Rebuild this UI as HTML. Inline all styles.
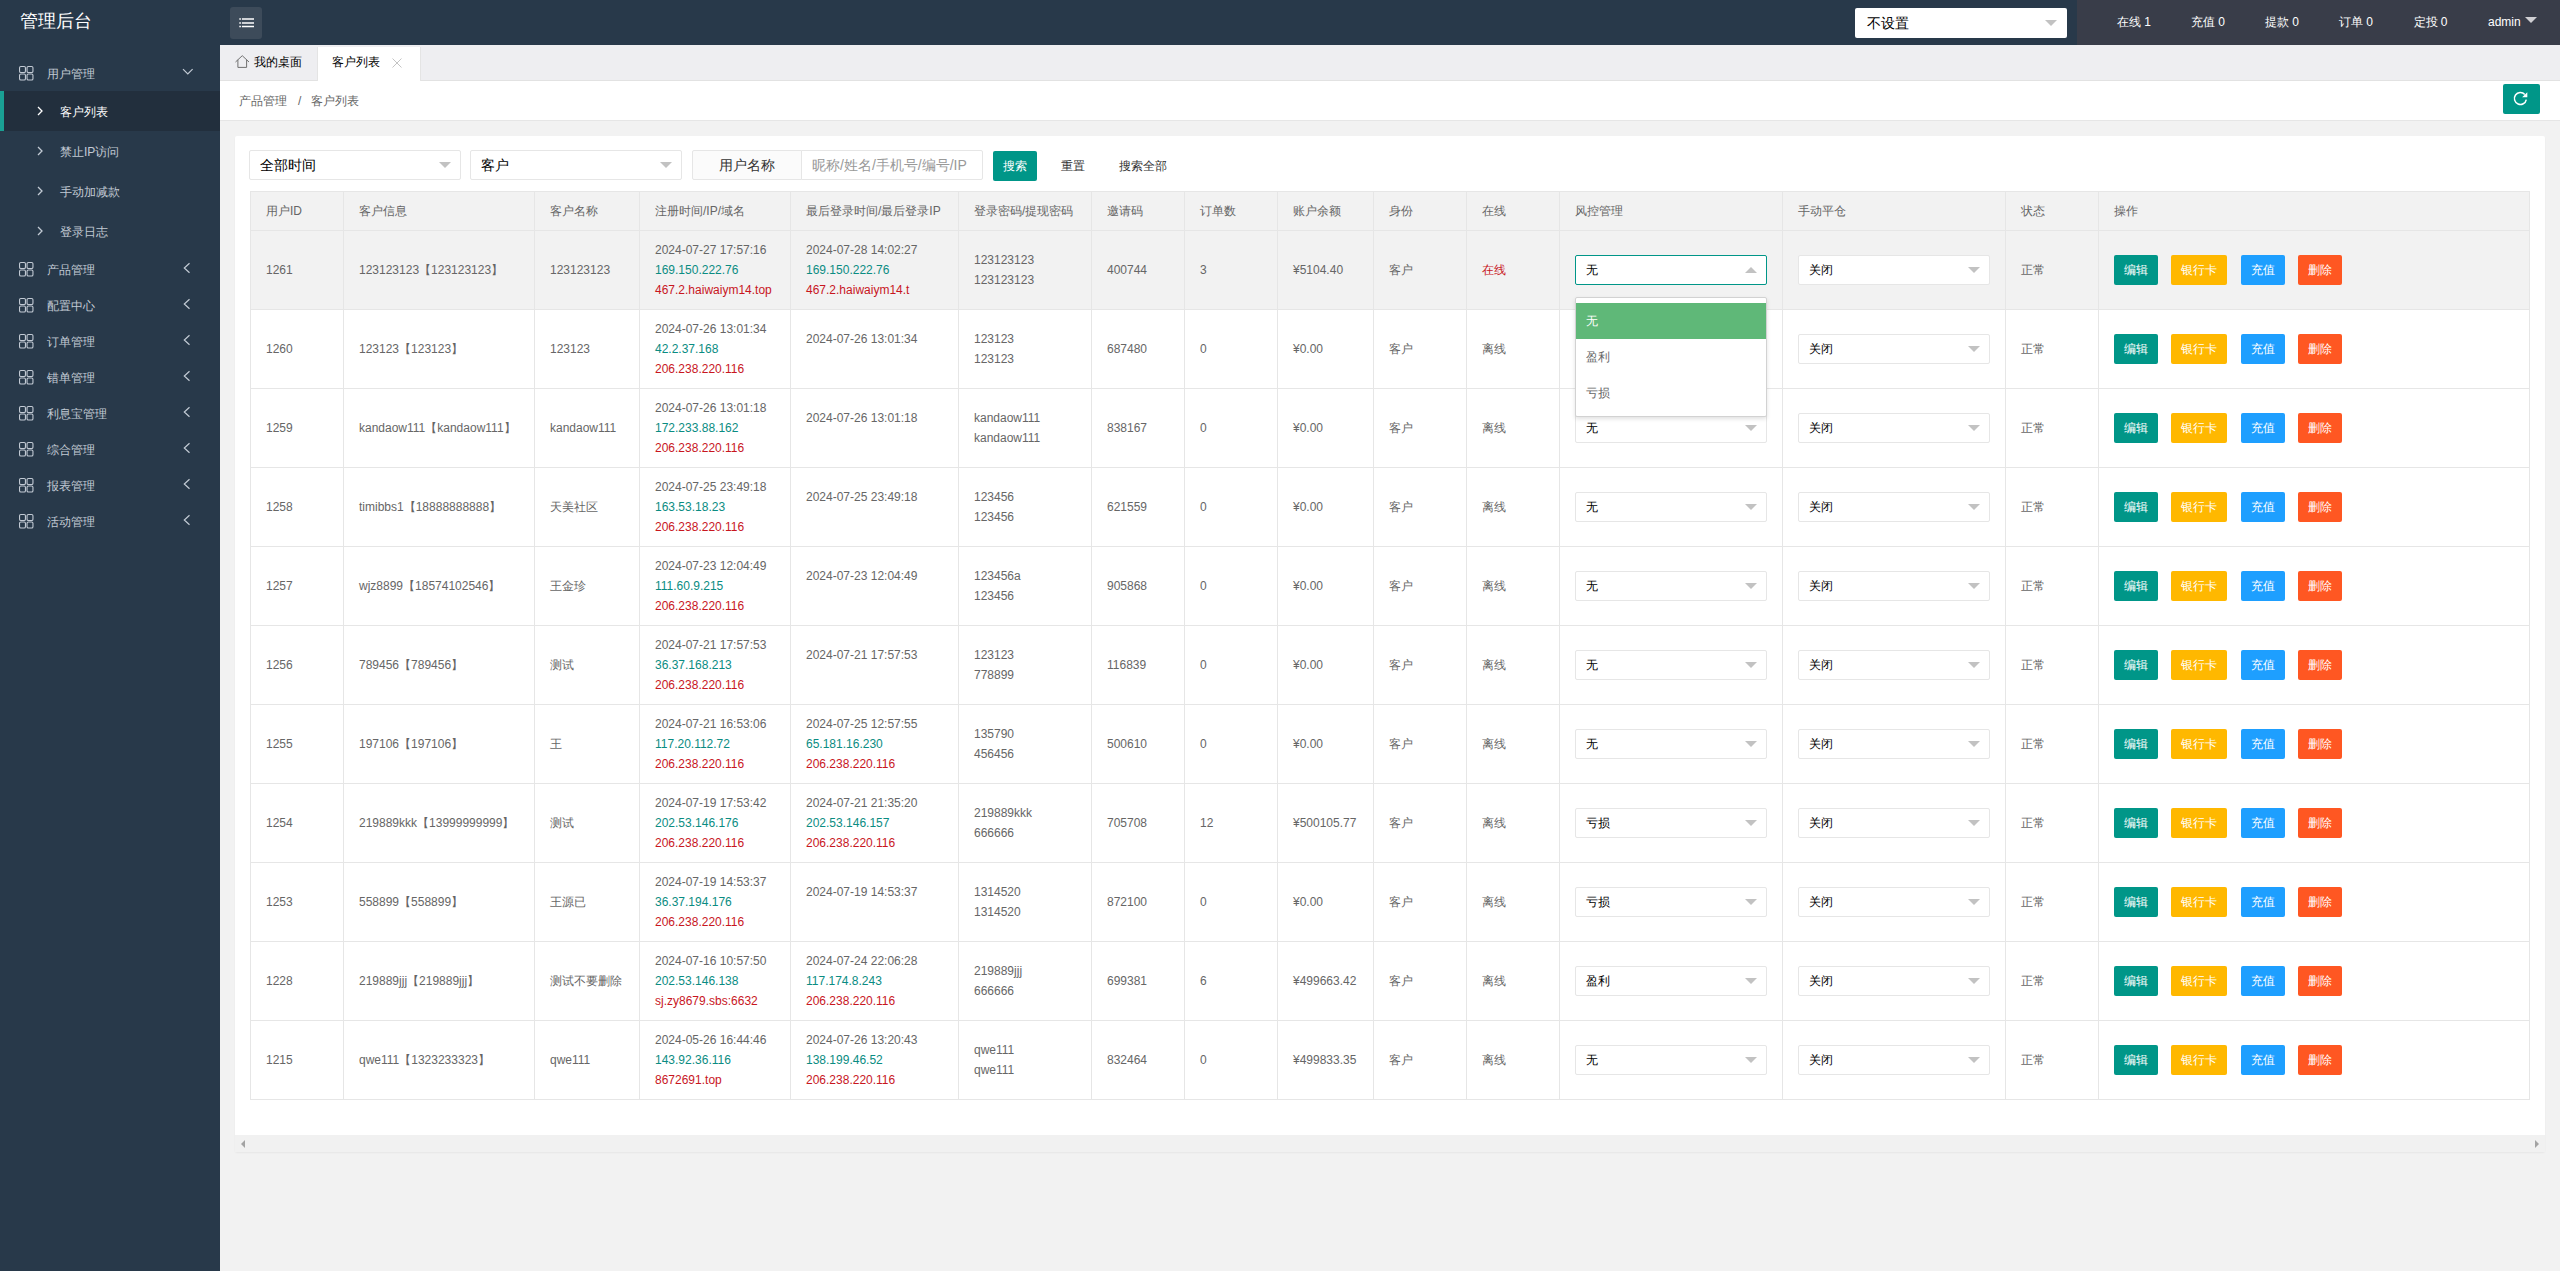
<!DOCTYPE html>
<html><head><meta charset="utf-8"><title>管理后台</title>
<style>
*{box-sizing:border-box;margin:0;padding:0}
html,body{width:2560px;height:1271px;overflow:hidden;background:#f2f2f2;font-family:"Liberation Sans",sans-serif;font-size:12px;color:#666}
.abs{position:absolute}
#hdr{position:absolute;left:0;top:0;width:2560px;height:45px;background:#28394a}
#hdr .logo{position:absolute;left:20px;top:9px;font-size:18px;line-height:24px;color:#fff}
#hdr .hb{position:absolute;left:230px;top:7px;width:32px;height:32px;border-radius:3px;background:#3d4b5a}
#hdr .hsel{position:absolute;left:1855px;top:8px;width:212px;height:30px;background:#fff;border-radius:2px;font-size:14px;color:#000;line-height:31px;padding-left:11.5px}
#hdr .right{position:absolute;left:2077px;top:0;width:483px;height:45px;background:#393d49}
#hdr .ri{position:absolute;top:0;line-height:45px;color:#fff;font-size:12px}
.tri{position:absolute;width:0;height:0;border-left:6px solid transparent;border-right:6px solid transparent;border-top:6px solid #c2c2c2}
.tri.up{border-top:0;border-bottom:6px solid #c2c2c2}
#side{position:absolute;left:0;top:45px;width:220px;height:1226px;background:#28394a}
.mp,.mc{position:absolute;left:0;width:220px;color:#c2cad4}
.mp{height:36px}
.mc{height:40px}
.mc.act{background:#222f3d;color:#fff}
.mc.act:before{content:"";position:absolute;left:0;top:0;width:4px;height:40px;background:#1aa094}
.gi{position:absolute;left:18.5px;top:10.5px;color:#c2cad4}
.mp .mt{position:absolute;left:47px;top:1px;line-height:36px}
.mc .mt{position:absolute;left:60px;top:1px;line-height:40px}
.chl{position:absolute;left:183px;top:11px}
.chd{position:absolute;left:181.5px;top:12.5px}
.chr{position:absolute;left:37px;top:15px}
#tabs{position:absolute;left:220px;top:45px;width:2340px;height:36px;background:#eeeef1;border-bottom:1px solid #e2e2e2}
.tab{position:absolute;top:0;height:36px;font-size:12px;color:#000;line-height:35px}
#bc{position:absolute;left:220px;top:81px;width:2340px;height:40px;background:#fff;border-bottom:1px solid #e6e6e6}
#bc .t{position:absolute;top:1px;line-height:39px;color:#666}
.rbtn{position:absolute;left:2503px;top:84px;width:37px;height:30px;background:#009688;border-radius:2px}
#card{position:absolute;left:235px;top:136px;width:2310px;height:1016px;background:#fff;border-radius:2px;box-shadow:0 1px 2px rgba(0,0,0,.05)}
.sbar{position:absolute;left:235px;top:1135px;width:2310px;height:17px;background:#f1f1f1}
.sel{position:absolute;top:150px;height:30px;border:1px solid #e6e6e6;border-radius:2px;background:#fff;font-size:14px;color:#000;line-height:28px;padding-left:10px}
.lbl{position:absolute;left:692px;top:150px;width:110px;height:30px;border:1px solid #e6e6e6;border-radius:2px 0 0 2px;background:#fbfbfb;font-size:14px;color:#333;line-height:28px;text-align:center}
.inp{position:absolute;left:801px;top:150px;width:182px;height:30px;border:1px solid #e6e6e6;border-radius:0 2px 2px 0;background:#fff;font-size:14px;color:#999;line-height:28px;padding-left:10px}
.sbtn{position:absolute;left:993px;top:151px;width:44px;height:30px;background:#009688;color:#fff;border-radius:2px;line-height:30px;text-align:center}
.tbtn{position:absolute;top:151px;line-height:30px;color:#333}
table{position:absolute;left:250px;top:191px;border-collapse:separate;border-spacing:0;table-layout:fixed;width:2280px;border-top:1px solid #e6e6e6;border-left:1px solid #e6e6e6}
th,td{border-right:1px solid #e6e6e6;border-bottom:1px solid #e6e6e6;padding:9px 15px;line-height:20px;text-align:left;font-weight:normal;color:#666;vertical-align:middle;white-space:nowrap;overflow:visible}
th{background:#f2f2f2}
tr.hov td{background:#f2f2f2}
.g{color:#0a8c82}
.r{color:#c8161e}
.tsel{position:relative;width:192px;height:30px;border:1px solid #e6e6e6;border-radius:2px;background:#fff;color:#000;line-height:28px;padding-left:10px;font-size:12px}
.tsel.open{border-color:#009688}
.tsel .tri{left:169px;top:11px}
.tsel .tri.up{top:11px}
.ops{height:30px;white-space:nowrap}
.b{display:inline-block;height:30px;line-height:30px;padding:0 10px;color:#fff;border-radius:2px;font-size:12px;vertical-align:top}
.b1{background:#009688}
.b2{background:#ffb800;margin-left:13px}
.b3{background:#1e9fff;margin-left:14px}
.b4{background:#ff5722;margin-left:13px}
.dd{position:absolute;left:1575px;top:297px;width:192px;height:120px;background:#fff;border:1px solid #d2d2d2;border-radius:2px;box-shadow:0 2px 4px rgba(0,0,0,.12);padding:5px 0}
.dd div{height:36px;line-height:36px;padding-left:10px;color:#666;font-size:12px}
.dd div.on{background:#5fb878;color:#fff}
</style></head><body>
<div id="hdr">
  <div class="logo">管理后台</div>
  <div class="hb"><svg style="position:absolute;left:8.5px;top:11px" width="16" height="10" viewBox="0 0 16 10"><path d="M0.3 1H1.9M2.9 1H15M0.3 4.9H1.9M2.9 4.9H15M0.3 8.6H1.9M2.9 8.6H15" stroke="#fff" stroke-width="1.5"/></svg></div>
  <div class="hsel">不设置<i class="tri" style="left:189.8px;top:12px"></i></div>
  <div class="right"></div>
  <div class="ri" style="left:2117px">在线 1</div>
  <div class="ri" style="left:2191px">充值 0</div>
  <div class="ri" style="left:2265px">提款 0</div>
  <div class="ri" style="left:2339px">订单 0</div>
  <div class="ri" style="left:2413.5px">定投 0</div>
  <div class="ri" style="left:2488px">admin</div>
  <i class="tri" style="left:2525px;top:17px;border-left-width:6px;border-right-width:6px;border-top:6.5px solid #cfcfd3"></i>
</div>
<div id="side">
  <div class="mp" style="top:10px"><svg class="gi" width="15" height="15" viewBox="0 0 15 15"><g fill="none" stroke="currentColor" stroke-width="1.1"><rect x="0.55" y="0.55" width="5.9" height="5.9" rx="1.3"/><rect x="8.05" y="0.55" width="5.9" height="5.9" rx="1.3"/><rect x="0.55" y="8.05" width="5.9" height="5.9" rx="1.3"/><rect x="8.05" y="8.05" width="5.9" height="5.9" rx="1.3"/></g></svg><span class="mt">用户管理</span><svg class="chd" width="12" height="8" viewBox="0 0 12 8"><path d="M1 1.2 L5.8 6 L10.6 1.2" fill="none" stroke="currentColor" stroke-width="1.2"/></svg></div>
  <div class="mc act" style="top:46px"><svg class="chr" width="6" height="10" viewBox="0 0 6 10"><path d="M1 1 L5 5 L1 9" fill="none" stroke="currentColor" stroke-width="1.3"/></svg><span class="mt">客户列表</span></div><div class="mc" style="top:86px"><svg class="chr" width="6" height="10" viewBox="0 0 6 10"><path d="M1 1 L5 5 L1 9" fill="none" stroke="currentColor" stroke-width="1.3"/></svg><span class="mt">禁止IP访问</span></div><div class="mc" style="top:126px"><svg class="chr" width="6" height="10" viewBox="0 0 6 10"><path d="M1 1 L5 5 L1 9" fill="none" stroke="currentColor" stroke-width="1.3"/></svg><span class="mt">手动加减款</span></div><div class="mc" style="top:166px"><svg class="chr" width="6" height="10" viewBox="0 0 6 10"><path d="M1 1 L5 5 L1 9" fill="none" stroke="currentColor" stroke-width="1.3"/></svg><span class="mt">登录日志</span></div>
  <div class="mp" style="top:206px"><svg class="gi" width="15" height="15" viewBox="0 0 15 15"><g fill="none" stroke="currentColor" stroke-width="1.1"><rect x="0.55" y="0.55" width="5.9" height="5.9" rx="1.3"/><rect x="8.05" y="0.55" width="5.9" height="5.9" rx="1.3"/><rect x="0.55" y="8.05" width="5.9" height="5.9" rx="1.3"/><rect x="8.05" y="8.05" width="5.9" height="5.9" rx="1.3"/></g></svg><span class="mt">产品管理</span><svg class="chl" width="8" height="14" viewBox="0 0 8 14"><path d="M6.5 1.2 L1.3 6 L6.5 10.8" fill="none" stroke="currentColor" stroke-width="1.2"/></svg></div><div class="mp" style="top:242px"><svg class="gi" width="15" height="15" viewBox="0 0 15 15"><g fill="none" stroke="currentColor" stroke-width="1.1"><rect x="0.55" y="0.55" width="5.9" height="5.9" rx="1.3"/><rect x="8.05" y="0.55" width="5.9" height="5.9" rx="1.3"/><rect x="0.55" y="8.05" width="5.9" height="5.9" rx="1.3"/><rect x="8.05" y="8.05" width="5.9" height="5.9" rx="1.3"/></g></svg><span class="mt">配置中心</span><svg class="chl" width="8" height="14" viewBox="0 0 8 14"><path d="M6.5 1.2 L1.3 6 L6.5 10.8" fill="none" stroke="currentColor" stroke-width="1.2"/></svg></div><div class="mp" style="top:278px"><svg class="gi" width="15" height="15" viewBox="0 0 15 15"><g fill="none" stroke="currentColor" stroke-width="1.1"><rect x="0.55" y="0.55" width="5.9" height="5.9" rx="1.3"/><rect x="8.05" y="0.55" width="5.9" height="5.9" rx="1.3"/><rect x="0.55" y="8.05" width="5.9" height="5.9" rx="1.3"/><rect x="8.05" y="8.05" width="5.9" height="5.9" rx="1.3"/></g></svg><span class="mt">订单管理</span><svg class="chl" width="8" height="14" viewBox="0 0 8 14"><path d="M6.5 1.2 L1.3 6 L6.5 10.8" fill="none" stroke="currentColor" stroke-width="1.2"/></svg></div><div class="mp" style="top:314px"><svg class="gi" width="15" height="15" viewBox="0 0 15 15"><g fill="none" stroke="currentColor" stroke-width="1.1"><rect x="0.55" y="0.55" width="5.9" height="5.9" rx="1.3"/><rect x="8.05" y="0.55" width="5.9" height="5.9" rx="1.3"/><rect x="0.55" y="8.05" width="5.9" height="5.9" rx="1.3"/><rect x="8.05" y="8.05" width="5.9" height="5.9" rx="1.3"/></g></svg><span class="mt">错单管理</span><svg class="chl" width="8" height="14" viewBox="0 0 8 14"><path d="M6.5 1.2 L1.3 6 L6.5 10.8" fill="none" stroke="currentColor" stroke-width="1.2"/></svg></div><div class="mp" style="top:350px"><svg class="gi" width="15" height="15" viewBox="0 0 15 15"><g fill="none" stroke="currentColor" stroke-width="1.1"><rect x="0.55" y="0.55" width="5.9" height="5.9" rx="1.3"/><rect x="8.05" y="0.55" width="5.9" height="5.9" rx="1.3"/><rect x="0.55" y="8.05" width="5.9" height="5.9" rx="1.3"/><rect x="8.05" y="8.05" width="5.9" height="5.9" rx="1.3"/></g></svg><span class="mt">利息宝管理</span><svg class="chl" width="8" height="14" viewBox="0 0 8 14"><path d="M6.5 1.2 L1.3 6 L6.5 10.8" fill="none" stroke="currentColor" stroke-width="1.2"/></svg></div><div class="mp" style="top:386px"><svg class="gi" width="15" height="15" viewBox="0 0 15 15"><g fill="none" stroke="currentColor" stroke-width="1.1"><rect x="0.55" y="0.55" width="5.9" height="5.9" rx="1.3"/><rect x="8.05" y="0.55" width="5.9" height="5.9" rx="1.3"/><rect x="0.55" y="8.05" width="5.9" height="5.9" rx="1.3"/><rect x="8.05" y="8.05" width="5.9" height="5.9" rx="1.3"/></g></svg><span class="mt">综合管理</span><svg class="chl" width="8" height="14" viewBox="0 0 8 14"><path d="M6.5 1.2 L1.3 6 L6.5 10.8" fill="none" stroke="currentColor" stroke-width="1.2"/></svg></div><div class="mp" style="top:422px"><svg class="gi" width="15" height="15" viewBox="0 0 15 15"><g fill="none" stroke="currentColor" stroke-width="1.1"><rect x="0.55" y="0.55" width="5.9" height="5.9" rx="1.3"/><rect x="8.05" y="0.55" width="5.9" height="5.9" rx="1.3"/><rect x="0.55" y="8.05" width="5.9" height="5.9" rx="1.3"/><rect x="8.05" y="8.05" width="5.9" height="5.9" rx="1.3"/></g></svg><span class="mt">报表管理</span><svg class="chl" width="8" height="14" viewBox="0 0 8 14"><path d="M6.5 1.2 L1.3 6 L6.5 10.8" fill="none" stroke="currentColor" stroke-width="1.2"/></svg></div><div class="mp" style="top:458px"><svg class="gi" width="15" height="15" viewBox="0 0 15 15"><g fill="none" stroke="currentColor" stroke-width="1.1"><rect x="0.55" y="0.55" width="5.9" height="5.9" rx="1.3"/><rect x="8.05" y="0.55" width="5.9" height="5.9" rx="1.3"/><rect x="0.55" y="8.05" width="5.9" height="5.9" rx="1.3"/><rect x="8.05" y="8.05" width="5.9" height="5.9" rx="1.3"/></g></svg><span class="mt">活动管理</span><svg class="chl" width="8" height="14" viewBox="0 0 8 14"><path d="M6.5 1.2 L1.3 6 L6.5 10.8" fill="none" stroke="currentColor" stroke-width="1.2"/></svg></div>
</div>
<div id="tabs">
  <div class="tab" style="left:0;width:97px"><svg style="position:absolute;left:14.5px;top:9.5px" width="15" height="14" viewBox="0 0 15 14"><path d="M0.5 7 L7.25 0.7 L14 7 M2.9 4.8 V12.4 H11.6 V4.8" fill="none" stroke="#707070" stroke-width="1"/></svg><span style="position:absolute;left:34px">我的桌面</span></div>
  <div class="tab" style="left:97px;top:2px;width:104px;height:35px;background:#fff;line-height:31px;border-left:1px solid #e4e4e4;border-right:1px solid #e4e4e4"><span style="position:absolute;left:14px">客户列表</span><svg style="position:absolute;left:74px;top:11px" width="10" height="10" viewBox="0 0 10 10"><path d="M0.5 0.5L9.5 9.5M9.5 0.5L0.5 9.5" stroke="#bdbdbd" stroke-width="0.9"/></svg></div>
</div>
<div id="bc"><span class="t" style="left:19px">产品管理</span><span class="t" style="left:78px">/</span><span class="t" style="left:91px">客户列表</span></div>
<div class="rbtn"><svg style="position:absolute;left:9.8px;top:7px" width="16" height="16" viewBox="0 0 16 16"><path d="M13.3 8.6 A6 6 0 1 1 11.8 3.4" fill="none" stroke="#fff" stroke-width="1.5"/><path d="M9.1 6.2 H14.3 V1.2 Z" fill="#fff"/></svg></div>
<div id="card"></div>
<div class="sbar"><i style="position:absolute;left:6px;top:4.5px;width:0;height:0;border-top:4px solid transparent;border-bottom:4px solid transparent;border-right:4px solid #a3a3a3"></i><i style="position:absolute;left:2300px;top:4.5px;width:0;height:0;border-top:4px solid transparent;border-bottom:4px solid transparent;border-left:4px solid #a3a3a3"></i></div>
<div class="sel" style="left:249px;width:212px">全部时间<i class="tri" style="left:189px;top:10.8px"></i></div>
<div class="sel" style="left:470px;width:212px">客户<i class="tri" style="left:189px;top:10.8px"></i></div>
<div class="lbl">用户名称</div>
<div class="inp">昵称/姓名/手机号/编号/IP</div>
<div class="sbtn">搜索</div>
<div class="tbtn" style="left:1061px">重置</div>
<div class="tbtn" style="left:1119px">搜索全部</div>
<table><colgroup><col style="width:93px"><col style="width:191px"><col style="width:105px"><col style="width:151px"><col style="width:168px"><col style="width:133px"><col style="width:93px"><col style="width:93px"><col style="width:96px"><col style="width:93px"><col style="width:93px"><col style="width:223px"><col style="width:223px"><col style="width:93px"><col style="width:431px"></colgroup><thead><tr><th>用户ID</th><th>客户信息</th><th>客户名称</th><th>注册时间/IP/域名</th><th>最后登录时间/最后登录IP</th><th>登录密码/提现密码</th><th>邀请码</th><th>订单数</th><th>账户余额</th><th>身份</th><th>在线</th><th>风控管理</th><th>手动平仓</th><th>状态</th><th>操作</th></tr></thead><tbody><tr class="hov"><td>1261</td><td>123123123【123123123】</td><td>123123123</td><td>2024-07-27 17:57:16<br><span class="g">169.150.222.76</span><br><span class="r">467.2.haiwaiym14.top</span></td><td>2024-07-28 14:02:27<br><span class="g">169.150.222.76</span><br><span class="r">467.2.haiwaiym14.t</span></td><td>123123123<br>123123123</td><td>400744</td><td>3</td><td>¥5104.40</td><td>客户</td><td><span class="r">在线</span></td><td><div class="tsel open"><span>无</span><i class="tri up"></i></div></td><td><div class="tsel"><span>关闭</span><i class="tri"></i></div></td><td>正常</td><td><div class="ops"><a class="b b1">编辑</a><a class="b b2">银行卡</a><a class="b b3">充值</a><a class="b b4">删除</a></div></td></tr><tr><td>1260</td><td>123123【123123】</td><td>123123</td><td>2024-07-26 13:01:34<br><span class="g">42.2.37.168</span><br><span class="r">206.238.220.116</span></td><td>2024-07-26 13:01:34<br>&nbsp;</td><td>123123<br>123123</td><td>687480</td><td>0</td><td>¥0.00</td><td>客户</td><td>离线</td><td><div class="tsel"><span>无</span><i class="tri"></i></div></td><td><div class="tsel"><span>关闭</span><i class="tri"></i></div></td><td>正常</td><td><div class="ops"><a class="b b1">编辑</a><a class="b b2">银行卡</a><a class="b b3">充值</a><a class="b b4">删除</a></div></td></tr><tr><td>1259</td><td>kandaow111【kandaow111】</td><td>kandaow111</td><td>2024-07-26 13:01:18<br><span class="g">172.233.88.162</span><br><span class="r">206.238.220.116</span></td><td>2024-07-26 13:01:18<br>&nbsp;</td><td>kandaow111<br>kandaow111</td><td>838167</td><td>0</td><td>¥0.00</td><td>客户</td><td>离线</td><td><div class="tsel"><span>无</span><i class="tri"></i></div></td><td><div class="tsel"><span>关闭</span><i class="tri"></i></div></td><td>正常</td><td><div class="ops"><a class="b b1">编辑</a><a class="b b2">银行卡</a><a class="b b3">充值</a><a class="b b4">删除</a></div></td></tr><tr><td>1258</td><td>timibbs1【18888888888】</td><td>天美社区</td><td>2024-07-25 23:49:18<br><span class="g">163.53.18.23</span><br><span class="r">206.238.220.116</span></td><td>2024-07-25 23:49:18<br>&nbsp;</td><td>123456<br>123456</td><td>621559</td><td>0</td><td>¥0.00</td><td>客户</td><td>离线</td><td><div class="tsel"><span>无</span><i class="tri"></i></div></td><td><div class="tsel"><span>关闭</span><i class="tri"></i></div></td><td>正常</td><td><div class="ops"><a class="b b1">编辑</a><a class="b b2">银行卡</a><a class="b b3">充值</a><a class="b b4">删除</a></div></td></tr><tr><td>1257</td><td>wjz8899【18574102546】</td><td>王金珍</td><td>2024-07-23 12:04:49<br><span class="g">111.60.9.215</span><br><span class="r">206.238.220.116</span></td><td>2024-07-23 12:04:49<br>&nbsp;</td><td>123456a<br>123456</td><td>905868</td><td>0</td><td>¥0.00</td><td>客户</td><td>离线</td><td><div class="tsel"><span>无</span><i class="tri"></i></div></td><td><div class="tsel"><span>关闭</span><i class="tri"></i></div></td><td>正常</td><td><div class="ops"><a class="b b1">编辑</a><a class="b b2">银行卡</a><a class="b b3">充值</a><a class="b b4">删除</a></div></td></tr><tr><td>1256</td><td>789456【789456】</td><td>测试</td><td>2024-07-21 17:57:53<br><span class="g">36.37.168.213</span><br><span class="r">206.238.220.116</span></td><td>2024-07-21 17:57:53<br>&nbsp;</td><td>123123<br>778899</td><td>116839</td><td>0</td><td>¥0.00</td><td>客户</td><td>离线</td><td><div class="tsel"><span>无</span><i class="tri"></i></div></td><td><div class="tsel"><span>关闭</span><i class="tri"></i></div></td><td>正常</td><td><div class="ops"><a class="b b1">编辑</a><a class="b b2">银行卡</a><a class="b b3">充值</a><a class="b b4">删除</a></div></td></tr><tr><td>1255</td><td>197106【197106】</td><td>王</td><td>2024-07-21 16:53:06<br><span class="g">117.20.112.72</span><br><span class="r">206.238.220.116</span></td><td>2024-07-25 12:57:55<br><span class="g">65.181.16.230</span><br><span class="r">206.238.220.116</span></td><td>135790<br>456456</td><td>500610</td><td>0</td><td>¥0.00</td><td>客户</td><td>离线</td><td><div class="tsel"><span>无</span><i class="tri"></i></div></td><td><div class="tsel"><span>关闭</span><i class="tri"></i></div></td><td>正常</td><td><div class="ops"><a class="b b1">编辑</a><a class="b b2">银行卡</a><a class="b b3">充值</a><a class="b b4">删除</a></div></td></tr><tr><td>1254</td><td>219889kkk【13999999999】</td><td>测试</td><td>2024-07-19 17:53:42<br><span class="g">202.53.146.176</span><br><span class="r">206.238.220.116</span></td><td>2024-07-21 21:35:20<br><span class="g">202.53.146.157</span><br><span class="r">206.238.220.116</span></td><td>219889kkk<br>666666</td><td>705708</td><td>12</td><td>¥500105.77</td><td>客户</td><td>离线</td><td><div class="tsel"><span>亏损</span><i class="tri"></i></div></td><td><div class="tsel"><span>关闭</span><i class="tri"></i></div></td><td>正常</td><td><div class="ops"><a class="b b1">编辑</a><a class="b b2">银行卡</a><a class="b b3">充值</a><a class="b b4">删除</a></div></td></tr><tr><td>1253</td><td>558899【558899】</td><td>王源已</td><td>2024-07-19 14:53:37<br><span class="g">36.37.194.176</span><br><span class="r">206.238.220.116</span></td><td>2024-07-19 14:53:37<br>&nbsp;</td><td>1314520<br>1314520</td><td>872100</td><td>0</td><td>¥0.00</td><td>客户</td><td>离线</td><td><div class="tsel"><span>亏损</span><i class="tri"></i></div></td><td><div class="tsel"><span>关闭</span><i class="tri"></i></div></td><td>正常</td><td><div class="ops"><a class="b b1">编辑</a><a class="b b2">银行卡</a><a class="b b3">充值</a><a class="b b4">删除</a></div></td></tr><tr><td>1228</td><td>219889jjj【219889jjj】</td><td>测试不要删除</td><td>2024-07-16 10:57:50<br><span class="g">202.53.146.138</span><br><span class="r">sj.zy8679.sbs:6632</span></td><td>2024-07-24 22:06:28<br><span class="g">117.174.8.243</span><br><span class="r">206.238.220.116</span></td><td>219889jjj<br>666666</td><td>699381</td><td>6</td><td>¥499663.42</td><td>客户</td><td>离线</td><td><div class="tsel"><span>盈利</span><i class="tri"></i></div></td><td><div class="tsel"><span>关闭</span><i class="tri"></i></div></td><td>正常</td><td><div class="ops"><a class="b b1">编辑</a><a class="b b2">银行卡</a><a class="b b3">充值</a><a class="b b4">删除</a></div></td></tr><tr><td>1215</td><td>qwe111【1323233323】</td><td>qwe111</td><td>2024-05-26 16:44:46<br><span class="g">143.92.36.116</span><br><span class="r">8672691.top</span></td><td>2024-07-26 13:20:43<br><span class="g">138.199.46.52</span><br><span class="r">206.238.220.116</span></td><td>qwe111<br>qwe111</td><td>832464</td><td>0</td><td>¥499833.35</td><td>客户</td><td>离线</td><td><div class="tsel"><span>无</span><i class="tri"></i></div></td><td><div class="tsel"><span>关闭</span><i class="tri"></i></div></td><td>正常</td><td><div class="ops"><a class="b b1">编辑</a><a class="b b2">银行卡</a><a class="b b3">充值</a><a class="b b4">删除</a></div></td></tr></tbody></table>
<div class="dd"><div class="on">无</div><div>盈利</div><div>亏损</div></div>
</body></html>
